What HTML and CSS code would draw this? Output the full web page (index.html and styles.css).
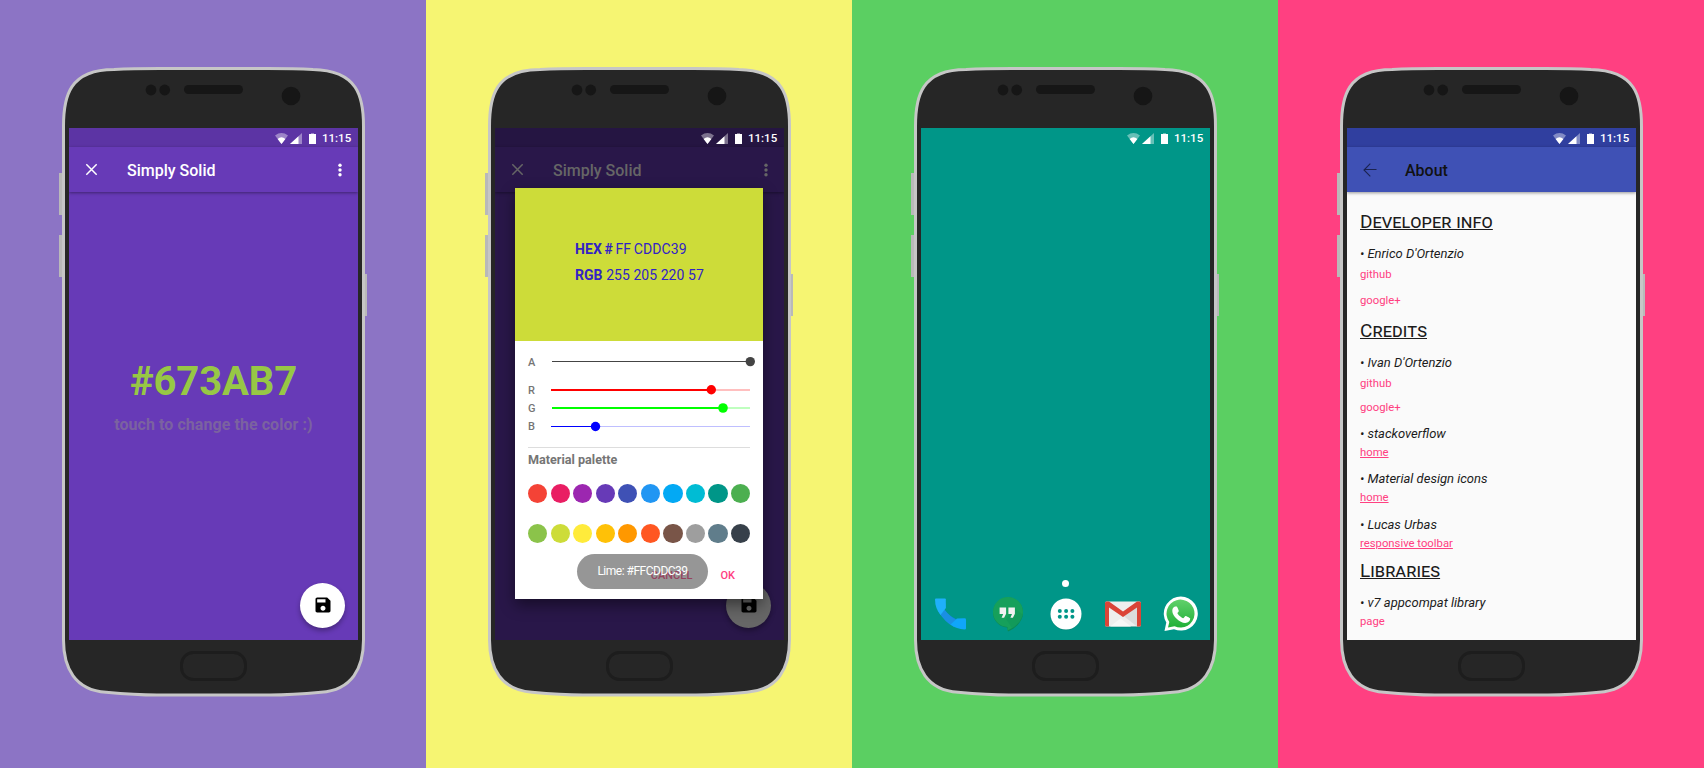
FILE: index.html
```
<!DOCTYPE html>
<html lang="en">
<head>
<meta charset="utf-8">
<title>Simply Solid</title>
<link rel="stylesheet" href="styles.css">
</head>
<body>
<svg class="defs" aria-hidden="true">
  <symbol id="frame" viewBox="0 0 426 768">
    <path fill="#b9b9b9" d="M59 173h4v42h-4zM59 235h4v42h-4zM364 274h3v42h-3z"/>
    <path fill="#262626" stroke="#c6c6c6" stroke-width="3" d="M63.5 126C63.5 97 69 69.5 114 69.5C130 68.6 150 68.5 160 68.5H267C277 68.5 297 68.6 313 69.5C358 70.500 363.500 97 363.500 126V640C363.500 668 352 690 321 692.200C300 694.200 285 695 270 695H157C142 695 127 694.200 106 692.200C75 690 63.500 668 63.500 640Z"/>
    <g fill="#161616"><circle cx="151" cy="90" r="5.400"/><circle cx="164.700" cy="90" r="5.400"/><rect x="184" y="85" width="59" height="9" rx="4.500"/><circle cx="291" cy="96" r="9.300"/></g>
    <rect x="181.500" y="652.500" width="64" height="27" rx="12" fill="none" stroke="#1d1d1d" stroke-width="3"/>
  </symbol>
  <symbol id="status" viewBox="0 0 42 11">
    <path fill="#fff" fill-opacity=".4" d="M0 2.500Q6.500-2.400 13 2.500L6.500 11ZM15 11 27 0V11Z"/>
    <path fill="#fff" d="M2.600 6Q6.500 2.700 10.400 6L6.500 11ZM15 11 23.500 3.200V11ZM34 1h7v10h-7z"/>
    <path fill="#fff" fill-opacity=".4" d="M36 0h3v1h-3z"/>
  </symbol>
  <symbol id="close" viewBox="0 0 12 12"><path d="M.8.8 11.200 11.200M11.200.8.8 11.200" fill="none" stroke="currentColor" stroke-width="1.500"/></symbol>
  <symbol id="more" viewBox="0 0 4 14"><g fill="currentColor"><circle cx="2" cy="2.200" r="1.700"/><circle cx="2" cy="7" r="1.700"/><circle cx="2" cy="11.800" r="1.700"/></g></symbol>
  <symbol id="save" viewBox="0 0 24 24"><path d="M17 3H5c-1.110 0-2 .9-2 2v14c0 1.100.89 2 2 2h14c1.100 0 2-.9 2-2V7l-4-4zm-5 16c-1.660 0-3-1.340-3-3s1.340-3 3-3 3 1.340 3 3-1.340 3-3 3zm3-10H5V5h10v4z"/></symbol>
</svg>
<main class="board">
  <section class="panel violet">
    <svg class="frame"><use href="#frame"/></svg>
    <div class="screen main">
      <div class="status"><svg class="status-icons"><use href="#status"/></svg><span>11:15</span></div>
      <header class="toolbar"><svg class="close"><use href="#close"/></svg><h1>Simply Solid</h1><svg class="more"><use href="#more"/></svg></header>
      <div class="canvas"><p class="code">#673AB7</p><p class="hint">touch to change the color :)</p></div>
      <div class="fab"><svg><use href="#save"/></svg></div>
    </div>
  </section>

  <section class="panel yellow">
    <svg class="frame"><use href="#frame"/></svg>
    <div class="screen main dimmed">
      <div class="status"><svg class="status-icons"><use href="#status"/></svg><span>11:15</span></div>
      <header class="toolbar"><svg class="close"><use href="#close"/></svg><h1>Simply Solid</h1><svg class="more"><use href="#more"/></svg></header>
      <div class="fab"><svg><use href="#save"/></svg></div>
      <div class="dialog">
        <div class="preview"><p class="hexline"><b>HEX #</b> FF CDDC39</p><p class="rgbline"><b>RGB</b> 255 205 220 57</p></div>
        <div class="sliders">
          <div class="slider alpha"><span>A</span><svg viewBox="0 0 206 12"><path d="M1 5.500H199" stroke="#444"/><circle cx="199.300" cy="5.600" r="4.700" fill="#444"/></svg></div>
          <div class="slider"><span>R</span><svg viewBox="0 0 206 12"><path d="M0 6H199" stroke="#ffbfbf" stroke-width="2"/><path d="M0 6H160" stroke="red" stroke-width="2"/><circle cx="160.300" cy="5.800" r="4.700" fill="red"/></svg></div>
          <div class="slider"><span>G</span><svg viewBox="0 0 206 12"><path d="M1 6H199" stroke="#bfffbf" stroke-width="2"/><path d="M1 6H172" stroke="#0f0" stroke-width="2"/><circle cx="172" cy="6" r="4.800" fill="#0f0"/></svg></div>
          <div class="slider"><span>B</span><svg viewBox="0 0 206 12"><path d="M0 6.500H199" stroke="#bfbfff"/><path d="M0 6.500H44" stroke="#00f"/><circle cx="44.500" cy="6.500" r="4.700" fill="#00f"/></svg></div>
        </div>
        <h2>Material palette</h2>
        <div class="palette">
          <i class="red"></i><i class="pink"></i><i class="purple"></i><i class="deep-purple"></i><i class="indigo"></i><i class="blue"></i><i class="light-blue"></i><i class="cyan"></i><i class="teal"></i><i class="green"></i>
          <i class="light-green"></i><i class="lime"></i><i class="yel"></i><i class="amber"></i><i class="orange"></i><i class="deep-orange"></i><i class="brown"></i><i class="grey"></i><i class="blue-grey"></i><i class="dark"></i>
        </div>
        <div class="actions"><span class="cancel">CANCEL</span><span>OK</span></div>
        <div class="toast"><span>Lime: #FFCDDC39</span></div>
      </div>
    </div>
  </section>

  <section class="panel lawn">
    <svg class="frame"><use href="#frame"/></svg>
    <div class="screen home">
      <div class="status"><svg class="status-icons"><use href="#status"/></svg><span>11:15</span></div>
      <div class="page-dot"></div>
      <div class="dock">
        <svg viewBox="0 0 36 36"><path fill="#0288d1" d="M6.500 14Q14.500 26.500 24 29.500L23.300 22.500Q17 20 12.200 13.500Z"/><path fill="#1a8fe3" d="M6 15Q12.500 26 22 31L25 24Q18 21 12 13Z"/><path fill="#1fb0fb" d="M3 3.200Q3 2.500 4 2.500H13Q13.700 2.500 13.800 3.300L13.900 12L8.500 19Q3 12 3 3.200Z"/><path fill="#10a6fa" d="M18.500 28.500 25 22.600 32.500 22.300Q34 22.300 34 23.500V32.500Q34 33.500 32.500 33.500Q24.500 33 18.500 28.500Z"/></svg>
        <svg viewBox="0 0 36 36"><path fill="#0b8a55" d="M18 35.500 17 31.500A15 15 0 1 1 33 17C32.500 26 25 33 18 35.500Z"/><path fill="#16a05b" d="M17.500 34.500V31A15 15 0 1 1 33 16C32.500 25 25 31 17.500 34.500Z"/><path fill="#10955a" d="M24.500 12 33 19Q31 27 22 32L16 23Z" opacity=".55"/><path fill="#f1f1f1" d="M9.600 11.500h6.500v6.300l-2 3.900h-2.500l1.600-3.700H9.600zM18.400 11.500h6.500v6.300l-2 3.900h-2.500l1.600-3.700h-3.600z"/></svg>
        <svg viewBox="0 0 36 36"><circle cx="18" cy="18.700" r="15.500" fill="#007f72" opacity=".6"/><circle cx="18" cy="18" r="15.500" fill="#fff"/><g fill="#009688"><circle cx="11.800" cy="14.900" r="2"/><circle cx="18.100" cy="14.900" r="2"/><circle cx="24.400" cy="14.900" r="2"/><circle cx="11.800" cy="20.700" r="2"/><circle cx="18.100" cy="20.700" r="2"/><circle cx="24.400" cy="20.700" r="2"/></g></svg>
        <svg viewBox="0 0 36 36"><rect y="6" width="36" height="25.300" rx="1.500" fill="#007f72"/><rect y="5.500" width="36" height="25" rx="1.500" fill="#eee"/><path fill="#dcdcdc" d="M18 19.500 32 30.500V10Z"/><path fill="#f7f7f7" d="M5 30.500 15.500 22.500 26 30.500Z"/><path fill="#db4437" d="M0 7Q0 5.500 1.500 5.500H4L18 15.500 32 5.500H34.500Q36 5.500 36 7V29Q36 30.500 34.500 30.500H32V11.500L18 21 4 11.500V30.500H1.500Q0 30.500 0 29Z"/></svg>
        <svg viewBox="0 0 36 36"><defs><linearGradient id="wa" x2="0" y2="1"><stop stop-color="#61d06b"/><stop offset="1" stop-color="#20b038"/></linearGradient></defs><path fill="#fff" d="M1.500 35 3.300 26.500A17 17 0 1 1 11 33.200Z"/><path fill="url(#wa)" d="M5 31.500 6.300 26A14 14 0 1 1 11.600 30.300Z"/><path fill="#fff" d="M12.500 10.500c-1 0-3.200 1.200-3.200 4.400 0 4.800 7.400 12 12.900 12 3.300 0 5-2 5-4.400 0-.6-4.200-2.700-4.700-2.600-.8.200-1.700 2.300-2.400 2.400-1.200 0-5.800-4-5.700-5.200 0-.7 1.500-1.300 1.400-2.200-.1-.5-1.600-4.200-2-4.300z"/></svg>
      </div>
    </div>
  </section>

  <section class="panel rose">
    <svg class="frame"><use href="#frame"/></svg>
    <div class="screen about">
      <div class="status"><svg class="status-icons"><use href="#status"/></svg><span>11:15</span></div>
      <header class="toolbar"><svg class="back" viewBox="0 0 14 14"><path d="M7.300.7 1 7 7.300 13.300M1 6.500H13.500" fill="none" stroke="currentColor" stroke-width="1.100"/></svg><h1>About</h1></header>
      <article>
        <h2>Developer info</h2>
        <h3>• Enrico D'Ortenzio</h3>
        <a class="after-name">github</a><a class="wide">google+</a>
        <h2 class="credits">Credits</h2>
        <h3>• Ivan D'Ortenzio</h3>
        <a class="after-name">github</a><a>google+</a>
        <h3 class="entry">• stackoverflow</h3>
        <a class="tight lined">home</a>
        <h3 class="entry">• Material design icons</h3>
        <a class="tight lined">home</a>
        <h3 class="entry last">• Lucas Urbas</h3>
        <a class="tight lined">responsive toolbar</a>
        <h2 class="libraries">Libraries</h2>
        <h3>• v7 appcompat library</h3>
        <a class="tight">page</a>
      </article>
    </div>
  </section>
</main>
</body>
</html>
```
FILE: styles.css
```
* { box-sizing: border-box; margin: 0; padding: 0; }
body { background: #fff; font-family: Roboto, "Liberation Sans", sans-serif; overflow: hidden; }
svg { display: block; flex: none; }
.defs { position: absolute; width: 0; height: 0; }
.board { display: grid; grid-template-columns: repeat(4, 426px); height: 768px; }
.panel { position: relative; padding: 128px 68px 128px 69px; }
.violet { background: #8c74c5; }
.yellow { background: #f6f572; }
.lawn { background: #5bcf62; }
.rose { background: #ff4081; }
.frame { position: absolute; inset: 0; width: 426px; height: 768px; }
.screen { position: relative; width: 289px; height: 512px; overflow: hidden; display: flex; flex-direction: column; }

.status { flex: none; height: 19px; display: flex; align-items: center; justify-content: flex-end; padding: 1px 7px 0 0; gap: 5px; color: #fff; font-size: 11.500px; font-weight: 500; line-height: 19px; }
.status span { width: 29px; text-align: right; white-space: nowrap; padding-top: 1px; }
.status-icons { width: 42px; height: 11px; }
.toolbar { flex: none; position: relative; height: 45px; display: flex; align-items: center; padding: 0 16px 0 17px; color: #fff; box-shadow: 0 1px 3px rgba(0,0,0,.4); }
.toolbar h1 { flex: 1; font-size: 16px; font-weight: 500; line-height: 20px; padding-top: 2px; }
.close { width: 12px; height: 12px; margin: 0 29px 0 0; }
.more { width: 4px; height: 14px; }

.main { background: #673ab7; }
.main .status { background: #5c34a4; }
.main .toolbar { background: #673ab7; }
.main .close { transform: translate(-.5px, -.5px); }
.canvas { padding-top: 167px; text-align: center; }
.code { color: #97c745; font-size: 40px; font-weight: 700; line-height: 46px; letter-spacing: -.1px; }
.hint { margin-top: 10px; color: #7b62a0; font-size: 16px; font-weight: 700; line-height: 20px; letter-spacing: .06px; }
.fab { position: absolute; left: 231px; top: 454.500px; width: 45px; height: 45px; border-radius: 50%; background: #fff; display: grid; place-items: center; box-shadow: 0 3px 5px rgba(0,0,0,.3); }
.fab svg { width: 20px; height: 20px; }

.dimmed, .dimmed .toolbar { background: #291749; }
.dimmed .status { background: #251542; }
.dimmed .toolbar { color: #666; }
.dimmed .fab { background: #666; }
.dialog { position: absolute; left: 20px; top: 60px; width: 248px; height: 411px; background: #fff; box-shadow: 0 6px 14px rgba(0,0,0,.45); }
.preview { height: 153px; padding: 51px 0 0 60px; background: #cddc39; color: #3223c6; font-size: 14px; line-height: 20px; }
.hexline { word-spacing: -1px; letter-spacing: .1px; }
.rgbline { margin-top: 6px; letter-spacing: .05px; }
.sliders { margin: 0 13px; padding-top: 15px; height: 107px; border-bottom: 1px solid #ddd; color: #757575; font-size: 11px; font-weight: 500; }
.slider { display: grid; grid-template-columns: 23px 206px; height: 12px; margin-bottom: 6px; line-height: 13px; }
.slider svg { width: 206px; height: 12px; }
.alpha { margin-bottom: 16px; }
.dialog h2 { height: 34px; padding: 3px 0 0 13px; color: #757575; font-size: 12.600px; font-weight: 700; line-height: 18px; }
.palette { display: grid; grid-template-columns: repeat(10, 19.300px); gap: 20.700px 3.250px; padding: 2px 13px 0; }
.palette i { height: 19.300px; border-radius: 50%; }
.red { background: #f44336; } .pink { background: #e91e63; } .purple { background: #9c27b0; } .deep-purple { background: #673ab7; } .indigo { background: #3f51b5; }
.blue { background: #2196f3; } .light-blue { background: #03a9f4; } .cyan { background: #00bcd4; } .teal { background: #009688; } .green { background: #4caf50; }
.light-green { background: #8bc34a; } .lime { background: #cddc39; } .yel { background: #ffeb3b; } .amber { background: #ffc107; } .orange { background: #ff9800; }
.deep-orange { background: #ff5722; } .brown { background: #795548; } .grey { background: #9e9e9e; } .blue-grey { background: #607d8b; } .dark { background: #37404a; }
.actions { display: flex; justify-content: flex-end; gap: 28px; padding: 24px 28px 0 0; color: #ff4081; font-size: 11px; font-weight: 500; line-height: 18px; }
.toast { position: absolute; left: 62px; top: 366px; width: 131px; height: 35px; border-radius: 18px; background: rgba(70,70,70,.57); display: grid; place-items: center; padding-bottom: 1px; color: #fff; font-size: 12px; letter-spacing: -.5px; }

.home { background: #009688; }
.page-dot { width: 7px; height: 7px; margin: 433px auto 0; border-radius: 50%; background: #fff; }
.dock { display: flex; justify-content: space-between; padding: 9px 11px 0 11px; }
.dock svg { width: 36px; height: 36px; }

.about { background: #fafafa; }
.about .status { background: #303f9f; }
.about .toolbar { background: #3f51b5; color: #111; padding-left: 16px; }
.back { width: 14px; height: 14px; margin: 0 28px 0 0; color: #1b2350; }
article { padding: 20px 13px 0; color: #1c1c1c; }
article h2 { width: max-content; height: 20px; font-size: 19px; font-weight: 400; line-height: 20px; letter-spacing: .04px; font-variant: small-caps; text-decoration: underline; text-decoration-thickness: 1px; }
article h3 { height: 16px; margin-top: 14px; font-size: 13px; font-weight: 400; font-style: italic; line-height: 15px; }
article a { display: block; height: 16px; margin-top: 8px; color: #ff4081; font-size: 11.300px; line-height: 16px; }
article .after-name { margin-top: 5px; }
article .wide { margin-top: 10px; }
article .tight { margin-top: 3px; }
article .entry { margin-top: 10px; }
article .last { margin-top: 11px; }
article .credits { margin-top: 12px; }
article .libraries { margin-top: 9px; }
.lined { text-decoration: underline; }
```
